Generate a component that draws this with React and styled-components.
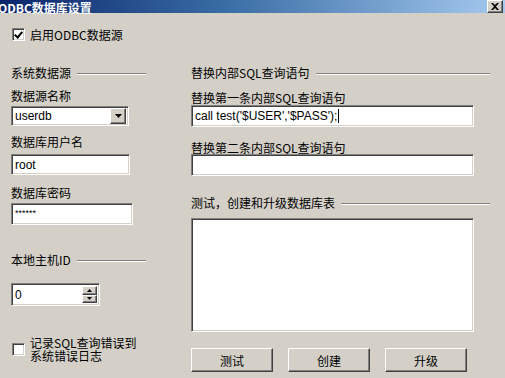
import React from 'react';
import styled, { createGlobalStyle, css } from 'styled-components';

const GlobalStyle = createGlobalStyle`
    html, body {
        margin: 0;
        padding: 0;
        background: #d4d0c8;
    }
    body {
        font-family: "Noto Sans CJK SC", "Liberation Sans", sans-serif;
        font-size: 12px;
        color: #000;
    }
`;

const sunken = css`
    box-sizing: border-box;
    border: 1px solid;
    border-color: #808080 #ffffff #ffffff #808080;
    box-shadow: inset 1px 1px #404040, inset -1px -1px #d4d0c8;
    background: #fff;
`;

const raised = css`
    box-sizing: border-box;
    border: 1px solid;
    border-color: #ffffff #404040 #404040 #ffffff;
    box-shadow: inset -1px -1px #808080;
    background: #d4d0c8;
`;

const App = () => {
    return (
        <>
            <GlobalStyle />
            <Window>
                <TitleBar>
                    <Title>ODBC数据库设置</Title>
                    <CloseButton>
                        <svg width="8" height="7" viewBox="0 0 8 7">
                            <path d="M0 0 L2 0 L4 2 L6 0 L8 0 L5 3.5 L8 7 L6 7 L4 5 L2 7 L0 7 L3 3.5 Z" fill="#000" />
                        </svg>
                    </CloseButton>
                </TitleBar>
                <Body>
                    <CheckRow>
                        <CheckBox checked />
                        <CheckText>启用ODBC数据源</CheckText>
                    </CheckRow>
                    <Columns>
                        <LeftCol>
                            <Heading>
                                <span>系统数据源</span>
                                <Etch />
                            </Heading>
                            <Label $mt={10}>数据源名称</Label>
                            <Combo>
                                <FieldText>userdb</FieldText>
                                <DropButton>
                                    <svg width="7" height="4" viewBox="0 0 7 4">
                                        <path d="M0 0 H7 L3.5 4 Z" fill="#000" />
                                    </svg>
                                </DropButton>
                            </Combo>
                            <Label $mt={9}>数据库用户名</Label>
                            <TextBox $w={119} $h={21} $mt={6}>
                                <FieldText>root</FieldText>
                            </TextBox>
                            <Label $mt={11}>数据库密码</Label>
                            <TextBox $w={122} $h={22} $mt={4}>
                                <Stars>******</Stars>
                            </TextBox>
                            <Heading $mt={28}>
                                <span>本地主机ID</span>
                                <Etch />
                            </Heading>
                            <Spin>
                                <FieldText>0</FieldText>
                                <SpinButtons>
                                    <SpinBtn>
                                        <svg width="5" height="3" viewBox="0 0 5 3">
                                            <path d="M0 3 H5 L2.5 0 Z" fill="#000" />
                                        </svg>
                                    </SpinBtn>
                                    <SpinBtn>
                                        <svg width="5" height="3" viewBox="0 0 5 3">
                                            <path d="M0 0 H5 L2.5 3 Z" fill="#000" />
                                        </svg>
                                    </SpinBtn>
                                </SpinButtons>
                            </Spin>
                            <LogRow>
                                <CheckBox />
                                <CheckText>
                                    记录SQL查询错误到
                                    <br />
                                    系统错误日志
                                </CheckText>
                            </LogRow>
                        </LeftCol>
                        <RightCol>
                            <Heading>
                                <span>替换内部SQL查询语句</span>
                                <Etch />
                            </Heading>
                            <Label $mt={12}>替换第一条内部SQL查询语句</Label>
                            <TextBox $w={283} $h={22} $mt={1}>
                                <FieldText>call test('$USER','$PASS');</FieldText>
                                <Caret />
                            </TextBox>
                            <Label $mt={14}>替换第二条内部SQL查询语句</Label>
                            <TextBox $w={283} $h={22} $mt={0} />
                            <Heading $mt={20}>
                                <span>测试，创建和升级数据库表</span>
                                <Etch />
                            </Heading>
                            <TextBox $w={283} $h={114} $mt={9} />
                            <Buttons>
                                <Button>测试</Button>
                                <Button>创建</Button>
                                <Button>升级</Button>
                            </Buttons>
                        </RightCol>
                    </Columns>
                </Body>
            </Window>
        </>
    );
};

export default App;

const Window = styled.div`
    width: 505px;
    height: 378px;
    overflow: hidden;
    background: #d4d0c8;
    display: flex;
    flex-direction: column;
`;

const TitleBar = styled.div`
    height: 13px;
    display: flex;
    align-items: center;
    justify-content: space-between;
    background: linear-gradient(to right, #0a246a 0%, #3a6ea5 45%, #a6caf0 100%);
    padding-right: 2px;
`;

const Title = styled.div`
    color: #fff;
    font-weight: bold;
    font-size: 12px;
    line-height: 13px;
    margin-left: -2px;
    margin-top: 1px;
`;

const CloseButton = styled.div`
    ${raised};
    width: 16px;
    height: 13px;
    display: flex;
    align-items: center;
    justify-content: center;
    margin-top: -1px;
`;

const Body = styled.div`
    padding-left: 11px;
    display: flex;
    flex-direction: column;
`;

const CheckRow = styled.div`
    display: flex;
    align-items: center;
    margin-top: 15px;
    padding-left: 1px;
`;

const CheckBox = styled.div`
    ${sunken};
    width: 13px;
    height: 13px;
    flex-shrink: 0;
    position: relative;
    ${(p) => p.checked && css`
        &::after {
            content: '';
            position: absolute;
            left: 3px;
            top: 1px;
            width: 3px;
            height: 6px;
            border: solid #000;
            border-width: 0 2px 2px 0;
            transform: rotate(40deg);
        }
    `}
`;

const CheckText = styled.div`
    margin-left: 5px;
    line-height: 13px;
`;

const Columns = styled.div`
    display: flex;
    gap: 45px;
    margin-top: 25px;
`;

const LeftCol = styled.div`
    width: 135px;
    display: flex;
    flex-direction: column;
    align-items: flex-start;
`;

const RightCol = styled.div`
    width: 299px;
    display: flex;
    flex-direction: column;
    align-items: flex-start;
`;

const Heading = styled.div`
    display: flex;
    align-items: center;
    align-self: stretch;
    line-height: 13px;
    margin-top: ${(p) => p.$mt || 0}px;
`;

const Etch = styled.div`
    flex: 1;
    height: 0;
    border-top: 1px solid #808080;
    border-bottom: 1px solid #ffffff;
    margin-left: 6px;
    margin-top: 2px;
`;

const Label = styled.div`
    line-height: 13px;
    margin-top: ${(p) => p.$mt}px;
`;

const TextBox = styled.div`
    ${sunken};
    width: ${(p) => p.$w}px;
    height: ${(p) => p.$h}px;
    margin-top: ${(p) => p.$mt}px;
    padding: 2px 3px;
    display: flex;
    align-items: ${(p) => (p.$h > 30 ? 'flex-start' : 'center')};
`;

const FieldText = styled.span`
    font-family: "Liberation Sans", Arial, sans-serif;
    font-size: 12px;
    line-height: 14px;
    white-space: pre;
`;

const Stars = styled.span`
    font-family: "Liberation Sans", Arial, sans-serif;
    font-size: 9px;
    letter-spacing: 0px;
    margin-top: -2px;
`;

const Caret = styled.span`
    width: 1px;
    height: 14px;
    background: #000;
    margin-left: 1px;
`;

const Combo = styled.div`
    ${sunken};
    width: 118px;
    height: 20px;
    margin-top: 4px;
    padding: 2px 2px 2px 3px;
    display: flex;
    align-items: center;
    justify-content: space-between;
`;

const DropButton = styled.div`
    ${raised};
    width: 16px;
    height: 16px;
    display: flex;
    align-items: center;
    justify-content: center;
`;

const Spin = styled.div`
    ${sunken};
    width: 89px;
    height: 23px;
    margin-top: 17px;
    padding: 2px 2px 2px 3px;
    display: flex;
    align-items: center;
    justify-content: space-between;
`;

const SpinButtons = styled.div`
    display: flex;
    flex-direction: column;
    align-self: stretch;
`;

const SpinBtn = styled.div`
    ${raised};
    width: 15px;
    flex: 1;
    display: flex;
    align-items: center;
    justify-content: center;
`;

const LogRow = styled.div`
    display: flex;
    align-items: center;
    margin-top: 30px;
    padding-left: 1px;
`;

const Buttons = styled.div`
    display: flex;
    gap: 15px;
    margin-top: 16px;
`;

const Button = styled.div`
    ${raised};
    width: 82px;
    height: 24px;
    display: flex;
    align-items: center;
    justify-content: center;
    line-height: 13px;
`;
